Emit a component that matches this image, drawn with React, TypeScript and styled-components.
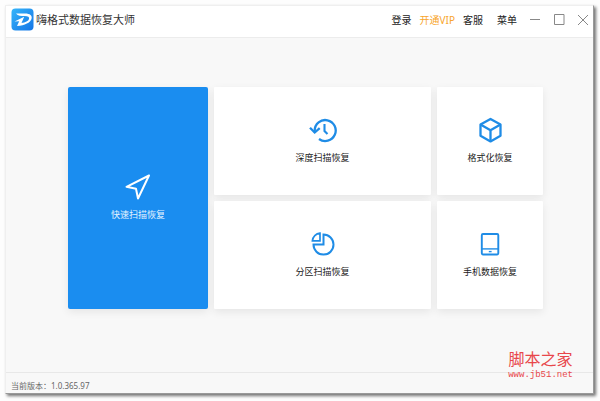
import React from "react";
import styled, { createGlobalStyle } from "styled-components";

const GlobalStyle = createGlobalStyle`
  * { box-sizing: border-box; }
  body {
    margin: 0;
    background: #fdfdfd;
    font-family: "Noto Sans", "Noto Sans CJK SC", sans-serif;
    color: #333;
  }
  button {
    margin: 0;
    padding: 0;
    border: 0;
    background: none;
    font: inherit;
    color: inherit;
    cursor: pointer;
  }
`;

const Page = styled.div`
  display: flex;
  min-height: 100vh;
  padding: 5px 6px 7px 5px;
`;

const Window = styled.div`
  position: relative;
  flex: 1;
  display: flex;
  flex-direction: column;
  background: #f8f8f8;
  border: 1px solid #efefef;
  border-right-color: #999;
  border-bottom-color: #999;
  box-shadow: 2px 2px 3px rgba(0, 0, 0, 0.55);
`;

const TitleBar = styled.header`
  display: flex;
  align-items: center;
  justify-content: space-between;
  height: 32px;
  padding: 0 4px 4px 5px;
  background: #fff;
  border-bottom: 1px solid #ececec;
`;

const Brand = styled.div`
  display: flex;
  align-items: center;
  gap: 2px;
`;

const Title = styled.h1`
  margin: 0;
  font-size: 11px;
  line-height: 16px;
  font-weight: 400;
`;

const Actions = styled.div`
  display: flex;
  align-items: center;
  gap: 12px;
`;

const Menu = styled.nav`
  display: flex;
  gap: 8px;
`;

const MenuButton = styled.button<{ $accent?: boolean; $spaced?: boolean }>`
  font-size: 10px;
  line-height: 16px;
  white-space: nowrap;
  color: ${(p) => (p.$accent ? "#f8a52c" : "#222")};
  margin-left: ${(p) => (p.$spaced ? "6px" : "0")};
`;

const WindowControls = styled.div`
  display: flex;
  gap: 12px;
`;

const ControlButton = styled.button`
  display: flex;
  color: #888;
`;

const Main = styled.main`
  flex: 1;
  display: grid;
  grid-template-columns: 140fr 217fr 106fr;
  grid-template-rows: 1fr 1fr;
  gap: 6px;
  padding: 49px 50px 63px 62px;
`;

const Card = styled.button<{ $primary?: boolean }>`
  display: flex;
  flex-direction: column;
  align-items: center;
  justify-content: center;
  gap: 6px;
  grid-row: ${(p) => (p.$primary ? "span 2" : "auto")};
  padding-bottom: 1px;
  border-radius: ${(p) => (p.$primary ? "2px" : "1px")};
  background: ${(p) => (p.$primary ? "#1a8df0" : "#fff")};
  color: ${(p) => (p.$primary ? "#e5f3ff" : "#222")};
  box-shadow: 0 3px 8px rgba(0, 0, 0, 0.08);

  svg {
    color: ${(p) => (p.$primary ? "#fff" : "#1f8ce6")};
  }
`;

const CardLabel = styled.span`
  font-size: 9px;
  line-height: 16px;
  white-space: nowrap;
`;

const StatusBar = styled.footer`
  height: 21px;
  padding: 5px 5px 0;
  border-top: 1px solid #e8e8e8;
  font-size: 8px;
  line-height: 16px;
  color: #666;
`;

const Watermark = styled.a`
  position: absolute;
  right: 20px;
  bottom: 13px;
  display: flex;
  flex-direction: column;
  align-items: center;
  color: #e8474b;
  text-decoration: none;
`;

const WatermarkName = styled.span`
  font-family: "Liberation Sans", "Noto Sans CJK SC", sans-serif;
  font-size: 16px;
  line-height: 20px;
`;

const WatermarkSite = styled.span`
  font-family: "Liberation Mono", monospace;
  font-size: 9px;
  line-height: 10px;
`;

const Logo = () => (
  <svg width="23" height="23" viewBox="0 0 23 23" aria-hidden="true">
    <defs>
      <linearGradient id="logoFill" x1="0" y1="0" x2="1" y2="1">
        <stop offset="0" stopColor="#35b5fa" />
        <stop offset="1" stopColor="#1675e6" />
      </linearGradient>
    </defs>
    <rect x="0.5" y="0.5" width="22" height="22" rx="4" fill="url(#logoFill)" />
    <path
      d="M5 5.500H14c5 0 7.600 2.100 6.500 5.400-1.200 3.700-6.400 6.200-14.500 7.100l2.200-4.700-4.600.2L13.200 8.800l-2.700 6.300c4-.6 6.900-2.100 7.500-4.100.6-2-.9-3-4.300-3C10 8 7 7.900 5 5.500z"
      fill="#fff"
    />
  </svg>
);

const lineProps = {
  fill: "none",
  stroke: "currentColor",
  strokeWidth: 2,
  "aria-hidden": true,
} as const;

const PlaneIcon = () => (
  <svg {...lineProps} width="28" height="28" viewBox="0 0 28 28" strokeLinejoin="round">
    <path d="M25 2.5 2.5 13.8l9.5 2L14 25.5z" />
  </svg>
);

const HistoryIcon = () => (
  <svg {...lineProps} width="28" height="28" viewBox="0 0 28 28">
    <path d="M5.7 16.5v-2A10.5 10.5 0 1 1 10 23" strokeWidth="2.3" />
    <path d="M1 11.8l4.7 4.7 5-4.3" strokeWidth="2.3" />
    <path d="M15.5 8v7l3 3" strokeWidth="2.1" />
  </svg>
);

const CubeIcon = () => (
  <svg {...lineProps} width="28" height="28" viewBox="0 0 28 28" strokeLinejoin="round">
    <path d="M14.5 3l10 5.6v11.2l-10 5.6-10-5.6V8.6z" strokeWidth="2.3" />
    <path d="M4.5 8.6l10 5.7 10-5.7M14.5 14.3v11.1" strokeWidth="2.3" />
  </svg>
);

const PieIcon = () => (
  <svg {...lineProps} width="28" height="28" viewBox="0 0 28 28">
    <path d="M14.5 4.6a10 10 0 1 1-10 10h10z" />
    <path d="M11 3.2v7.6H3.4A8.2 8.2 0 0 1 11 3.2z" strokeWidth="1.7" />
  </svg>
);

const TabletIcon = () => (
  <svg {...lineProps} width="28" height="28" viewBox="0 0 28 28">
    <rect x="5.8" y="4" width="16.5" height="20.5" rx="1.2" strokeWidth="1.9" />
    <path d="M6 18.9h16" strokeWidth="1.4" />
    <path d="M12.8 21.6h2.8" strokeWidth="1.4" />
  </svg>
);

const controls = [
  { label: "最小化", path: "M1 5.5h10" },
  { label: "最大化", path: "M1.5 0.5h9.5v10H1.5z" },
  { label: "关闭", path: "M1 1l10 10M11 1L1 11" },
];

const cards = [
  { label: "快速扫描恢复", Icon: PlaneIcon, primary: true },
  { label: "深度扫描恢复", Icon: HistoryIcon },
  { label: "格式化恢复", Icon: CubeIcon },
  { label: "分区扫描恢复", Icon: PieIcon },
  { label: "手机数据恢复", Icon: TabletIcon },
];

export default function App() {
  return (
    <>
      <GlobalStyle />
      <Page>
        <Window>
          <TitleBar>
            <Brand>
              <Logo />
              <Title>嗨格式数据恢复大师</Title>
            </Brand>
            <Actions>
              <Menu>
                <MenuButton>登录</MenuButton>
                <MenuButton $accent>开通VIP</MenuButton>
                <MenuButton>客服</MenuButton>
                <MenuButton $spaced>菜单</MenuButton>
              </Menu>
              <WindowControls>
                {controls.map(({ label, path }) => (
                  <ControlButton key={label} aria-label={label}>
                    <svg width="12" height="12" viewBox="0 0 12 12" fill="none" stroke="currentColor">
                      <path d={path} />
                    </svg>
                  </ControlButton>
                ))}
              </WindowControls>
            </Actions>
          </TitleBar>
          <Main>
            {cards.map(({ label, Icon, primary }) => (
              <Card key={label} $primary={primary}>
                <Icon />
                <CardLabel>{label}</CardLabel>
              </Card>
            ))}
          </Main>
          <StatusBar>当前版本：1.0.365.97</StatusBar>
          <Watermark href="#">
            <WatermarkName>脚本之家</WatermarkName>
            <WatermarkSite>www.jb51.net</WatermarkSite>
          </Watermark>
        </Window>
      </Page>
    </>
  );
}
